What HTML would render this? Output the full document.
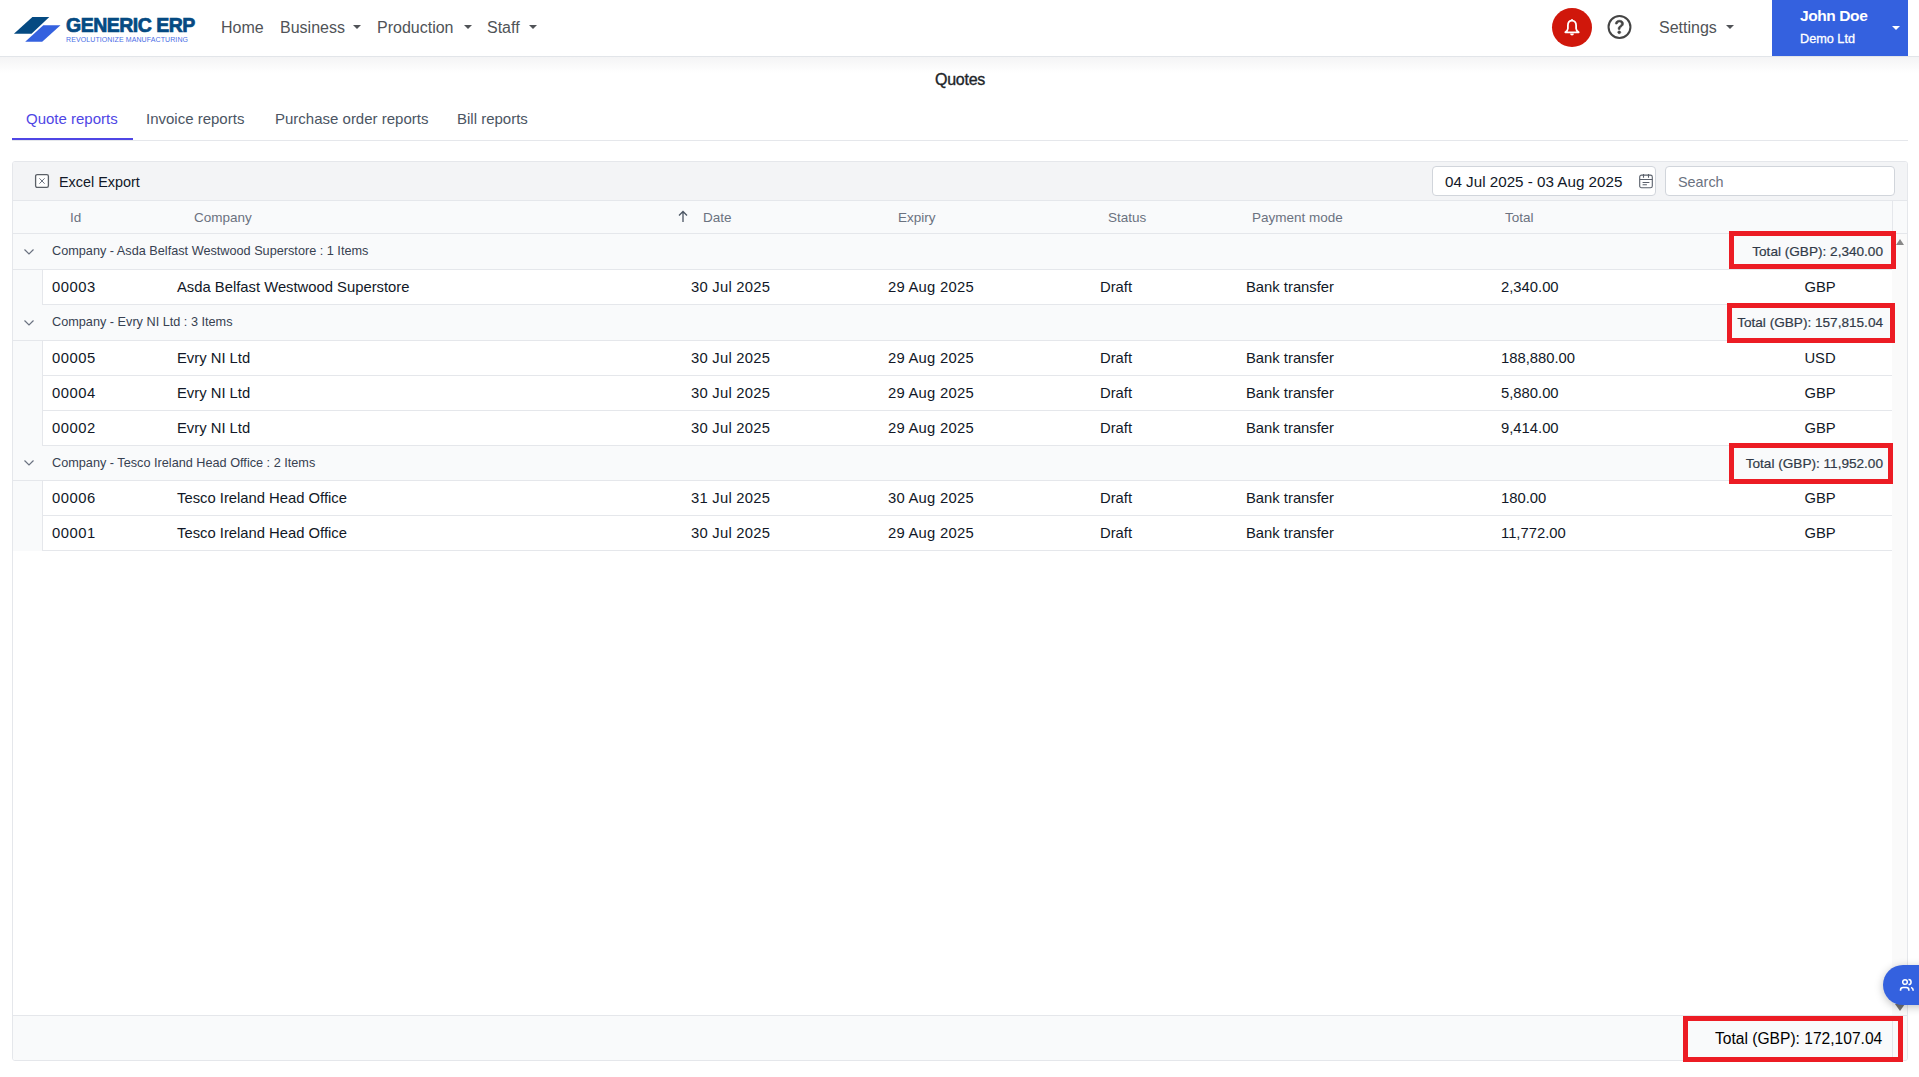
<!DOCTYPE html>
<html><head><meta charset="utf-8"><style>
*{box-sizing:border-box;margin:0;padding:0}
html,body{width:1919px;height:1077px;overflow:hidden;background:#fff;font-family:"Liberation Sans",sans-serif;position:relative}
.a{position:absolute;white-space:nowrap}
#hdr{position:absolute;left:0;top:0;width:1919px;height:57px;border-bottom:1px solid #e2e5e9;background:#fff}
#shadow{position:absolute;left:0;top:57px;width:1919px;height:16px;background:linear-gradient(#f4f4f5,#fff)}
.nav{font-size:16px;color:#505357;line-height:20px;top:18px}
.caret{position:absolute;width:0;height:0;border-left:4px solid transparent;border-right:4px solid transparent;border-top:4px solid #505357}
.tab{font-size:15px;color:#4b5563;line-height:20px;top:109px}
#tabline{position:absolute;left:12px;top:140px;width:1896px;height:1px;background:#e5e7eb}
#tabul{position:absolute;left:12px;top:138px;width:121px;height:2px;background:#4f46e5}
#box{position:absolute;left:12px;top:161px;width:1896px;height:900px;border:1px solid #e5e7eb;background:#fff;border-radius:3px}
#tool{position:absolute;left:13px;top:162px;width:1894px;height:39px;border-radius:2px 2px 0 0;background:#f3f4f6;border-bottom:1px solid #e5e7eb}
#colh{position:absolute;left:13px;top:201px;width:1894px;height:33px;background:#f9fafb;border-bottom:1px solid #e5e7eb}
#gutter{position:absolute;left:1892px;top:234px;width:15px;height:781px;background:#fafafa}
#cdiv{position:absolute;left:1892px;top:201px;width:1px;height:32px;background:#e5e7eb}
.ch{font-size:13.5px;color:#6b7280;line-height:16px;top:210px}
.grp{position:absolute;left:13px;width:1879px;background:#f9fafb;border-bottom:1px solid #e5e7eb}
.row{position:absolute;left:42px;width:1850px;background:#fff;border-left:1px solid #e5e7eb;border-bottom:1px solid #e5e7eb}
.gt{font-size:12.7px;color:#374151;line-height:16px;left:52px}
.chev{position:absolute;left:25px;width:8px;height:8px;border-right:1.3px solid #6b7280;border-bottom:1.3px solid #6b7280;transform:rotate(45deg)}
.gtt{font-size:13.6px;color:#313a48;line-height:16px;right:36px;letter-spacing:0px;-webkit-text-stroke:0.2px #313a48}
.c{font-size:14.8px;color:#111827;line-height:18px}
.rb{position:absolute;border:5px solid #ec1c24}
#foot{position:absolute;left:13px;top:1015px;width:1894px;height:45px;border-radius:0 0 2px 2px;background:#f9fafb;border-top:1px solid #e5e7eb}
</style></head><body>
<div id="hdr"></div>
<div id="shadow"></div>
<!-- logo -->
<svg class="a" style="left:0;top:0" width="66" height="50" viewBox="0 0 66 50">
<polygon points="32.4,17 49.3,17 31.5,33.8 13.9,33.8" fill="#054a82"/>
<polygon points="43.3,25.3 60.5,25.3 42.2,41.8 25.2,41.8" fill="#3461df"/>
</svg>
<div class="a" style="left:66px;top:13.5px;font-size:19.5px;font-weight:bold;color:#054a82;line-height:22px;letter-spacing:-0.5px;-webkit-text-stroke:0.7px #054a82">GENERIC ERP</div>
<div class="a" style="left:66px;top:34.5px;font-size:7px;color:#4a6ee6;line-height:9px;letter-spacing:0.1px">REVOLUTIONIZE MANUFACTURING</div>
<div class="a nav" style="left:221px">Home</div>
<div class="a nav" style="left:280px">Business</div><div class="caret" style="left:353px;top:25px"></div>
<div class="a nav" style="left:377px">Production</div><div class="caret" style="left:464px;top:25px"></div>
<div class="a nav" style="left:487px">Staff</div><div class="caret" style="left:529px;top:25px"></div>
<!-- right header -->
<div class="a" style="left:1552px;top:8px;width:40px;height:39px;border-radius:50%;background:#d0170b"></div>
<svg class="a" style="left:1562px;top:17px" width="20" height="20" viewBox="0 0 20 20"><circle cx="10" cy="3" r="1" fill="#fff"/><path d="M10 3.6C7.2 3.6 5.9 5.8 5.9 8.6V11.6Q5.9 13.6 3.3 15.3H16.7Q14.1 13.6 14.1 11.6V8.6C14.1 5.8 12.8 3.6 10 3.6Z" fill="none" stroke="#fff" stroke-width="1.8" stroke-linejoin="round"/><path d="M8.1 16.6a1.9 1.9 0 0 0 3.8 0Z" fill="#fff"/></svg>
<svg class="a" style="left:1607px;top:15px" width="25" height="24" viewBox="0 0 16.67 16"><circle cx="8.33" cy="8" r="7.3" fill="none" stroke="#444" stroke-width="1.35"/><g transform="translate(0.33,0)"><path fill="#444" stroke="#444" stroke-width="0.4" d="M5.255 5.786a.237.237 0 0 0 .241.247h.825c.138 0 .248-.113.266-.25.09-.656.54-1.134 1.342-1.134.686 0 1.314.343 1.314 1.168 0 .635-.374.927-.965 1.371-.673.489-1.206 1.06-1.168 1.987l.003.217a.25.25 0 0 0 .25.246h.811a.25.25 0 0 0 .25-.25v-.105c0-.718.273-.927 1.01-1.486.609-.463 1.244-.977 1.244-2.056 0-1.511-1.276-2.241-2.673-2.241-1.267 0-2.655.59-2.75 2.286zm1.557 5.763c0 .533.425.927 1.01.927.609 0 1.028-.394 1.028-.927 0-.552-.42-.94-1.029-.94-.584 0-1.009.388-1.009.94z"/></g></svg>
<div class="a nav" style="left:1659px">Settings</div><div class="caret" style="left:1726px;top:25px"></div>
<div class="a" style="left:1772px;top:0;width:136px;height:56px;background:#3461df"></div>
<div class="a" style="left:1800px;top:7px;font-size:15.5px;font-weight:bold;color:#fff;line-height:18px;letter-spacing:-0.4px">John Doe</div>
<div class="a" style="left:1800px;top:32px;font-size:12.7px;color:#fff;line-height:15px;-webkit-text-stroke:0.3px #fff">Demo Ltd</div>
<div class="caret" style="left:1892px;top:26px;border-top-color:#fff"></div>
<!-- title + tabs -->
<div class="a" style="left:935px;top:70px;font-size:16px;color:#212529;line-height:20px;-webkit-text-stroke:0.35px #212529;letter-spacing:-0.25px">Quotes</div>
<div class="a tab" style="left:26px;color:#4f46e5">Quote reports</div>
<div class="a tab" style="left:146px">Invoice reports</div>
<div class="a tab" style="left:275px">Purchase order reports</div>
<div class="a tab" style="left:457px">Bill reports</div>
<div id="tabline"></div><div id="tabul"></div>
<!-- table -->
<div id="box"></div>
<div id="tool"></div>
<svg class="a" style="left:34px;top:173px" width="16" height="16" viewBox="0 0 16 16"><rect x="1.6" y="1.6" width="12.8" height="12.8" rx="1.6" fill="#fff" stroke="#5a5f66" stroke-width="1.3"/><path d="M5.4 5.3L10.6 10.7M10.6 5.3L5.4 10.7" stroke="#6b7280" stroke-width="1"/></svg>
<div class="a" style="left:59px;top:173px;font-size:14.4px;color:#111827;line-height:18px">Excel Export</div>
<div class="a" style="left:1432px;top:166px;width:224px;height:30px;border:1px solid #d1d5db;border-radius:4px;background:#fff"></div>
<div class="a" style="left:1445px;top:173px;font-size:15.2px;color:#111827;line-height:18px">04 Jul 2025 - 03 Aug 2025</div>
<svg class="a" style="left:1638px;top:172px" width="16" height="17" viewBox="0 0 16 17"><rect x="1.7" y="3.1" width="12.6" height="12.6" rx="1.8" fill="none" stroke="#5a606b" stroke-width="1.1"/><path d="M5.5 2v3.8M10.5 2v3.8M1.7 7.5h12.6" stroke="#5a606b" stroke-width="1.1"/><path d="M5 10.5h6M5 12.8h3.5" stroke="#5a606b" stroke-width="1.1" stroke-linecap="round"/></svg>
<div class="a" style="left:1665px;top:166px;width:230px;height:30px;border:1px solid #d1d5db;border-radius:4px;background:#fff"></div>
<div class="a" style="left:1678px;top:173px;font-size:14.4px;color:#6b7280;line-height:18px">Search</div>
<div id="colh"></div>
<div id="gutter"></div><div id="cdiv"></div>
<div class="a ch" style="left:70px">Id</div>
<div class="a ch" style="left:194px">Company</div>
<svg class="a" style="left:677px;top:210px" width="12" height="13" viewBox="0 0 12 13"><path d="M6 12V1.5M2 5.5l4-4 4 4" fill="none" stroke="#4b5563" stroke-width="1.3"/></svg>
<div class="a ch" style="left:703px">Date</div>
<div class="a ch" style="left:898px">Expiry</div>
<div class="a ch" style="left:1108px">Status</div>
<div class="a ch" style="left:1252px">Payment mode</div>
<div class="a ch" style="left:1505px">Total</div>

<!-- groups -->
<div class="a" style="left:13px;top:234px;width:1879px;height:317px;background:#f9fafb"></div>
<div class="grp" style="top:234px;height:36px"></div>
<svg class="a" style="left:23px;top:247px" width="12" height="9" viewBox="0 0 12 9"><path d="M1.5 2.5L6 7L10.5 2.5" fill="none" stroke="#6b7280" stroke-width="1.2"/></svg>
<div class="a gt" style="top:243px">Company - Asda Belfast Westwood Superstore : 1 Items</div>
<div class="a gtt" style="top:244px">Total (GBP): 2,340.00</div>
<div class="row" style="top:270px;height:35px"></div>

<div class="grp" style="top:305px;height:36px"></div>
<svg class="a" style="left:23px;top:318px" width="12" height="9" viewBox="0 0 12 9"><path d="M1.5 2.5L6 7L10.5 2.5" fill="none" stroke="#6b7280" stroke-width="1.2"/></svg>
<div class="a gt" style="top:314px">Company - Evry NI Ltd : 3 Items</div>
<div class="a gtt" style="top:315px">Total (GBP): 157,815.04</div>
<div class="row" style="top:341px;height:35px"></div>
<div class="row" style="top:376px;height:35px"></div>
<div class="row" style="top:411px;height:35px"></div>

<div class="grp" style="top:446px;height:35px"></div>
<svg class="a" style="left:23px;top:458px" width="12" height="9" viewBox="0 0 12 9"><path d="M1.5 2.5L6 7L10.5 2.5" fill="none" stroke="#6b7280" stroke-width="1.2"/></svg>
<div class="a gt" style="top:455px">Company - Tesco Ireland Head Office : 2 Items</div>
<div class="a gtt" style="top:456px">Total (GBP): 11,952.00</div>
<div class="row" style="top:481px;height:35px"></div>
<div class="row" style="top:516px;height:35px"></div>

<div class="a c" style="left:52px;top:278px;letter-spacing:0.5px">00003</div>
<div class="a c" style="left:177px;top:278px">Asda Belfast Westwood Superstore</div>
<div class="a c" style="left:691px;top:278px;letter-spacing:0.25px">30 Jul 2025</div>
<div class="a c" style="left:888px;top:278px;letter-spacing:0.25px">29 Aug 2025</div>
<div class="a c" style="left:1100px;top:278px">Draft</div>
<div class="a c" style="left:1246px;top:278px">Bank transfer</div>
<div class="a c" style="left:1501px;top:278px">2,340.00</div>
<div class="a c" style="left:1790px;width:60px;text-align:center;top:278px">GBP</div>
<div class="a c" style="left:52px;top:349px;letter-spacing:0.5px">00005</div>
<div class="a c" style="left:177px;top:349px">Evry NI Ltd</div>
<div class="a c" style="left:691px;top:349px;letter-spacing:0.25px">30 Jul 2025</div>
<div class="a c" style="left:888px;top:349px;letter-spacing:0.25px">29 Aug 2025</div>
<div class="a c" style="left:1100px;top:349px">Draft</div>
<div class="a c" style="left:1246px;top:349px">Bank transfer</div>
<div class="a c" style="left:1501px;top:349px">188,880.00</div>
<div class="a c" style="left:1790px;width:60px;text-align:center;top:349px">USD</div>
<div class="a c" style="left:52px;top:384px;letter-spacing:0.5px">00004</div>
<div class="a c" style="left:177px;top:384px">Evry NI Ltd</div>
<div class="a c" style="left:691px;top:384px;letter-spacing:0.25px">30 Jul 2025</div>
<div class="a c" style="left:888px;top:384px;letter-spacing:0.25px">29 Aug 2025</div>
<div class="a c" style="left:1100px;top:384px">Draft</div>
<div class="a c" style="left:1246px;top:384px">Bank transfer</div>
<div class="a c" style="left:1501px;top:384px">5,880.00</div>
<div class="a c" style="left:1790px;width:60px;text-align:center;top:384px">GBP</div>
<div class="a c" style="left:52px;top:419px;letter-spacing:0.5px">00002</div>
<div class="a c" style="left:177px;top:419px">Evry NI Ltd</div>
<div class="a c" style="left:691px;top:419px;letter-spacing:0.25px">30 Jul 2025</div>
<div class="a c" style="left:888px;top:419px;letter-spacing:0.25px">29 Aug 2025</div>
<div class="a c" style="left:1100px;top:419px">Draft</div>
<div class="a c" style="left:1246px;top:419px">Bank transfer</div>
<div class="a c" style="left:1501px;top:419px">9,414.00</div>
<div class="a c" style="left:1790px;width:60px;text-align:center;top:419px">GBP</div>
<div class="a c" style="left:52px;top:489px;letter-spacing:0.5px">00006</div>
<div class="a c" style="left:177px;top:489px">Tesco Ireland Head Office</div>
<div class="a c" style="left:691px;top:489px;letter-spacing:0.25px">31 Jul 2025</div>
<div class="a c" style="left:888px;top:489px;letter-spacing:0.25px">30 Aug 2025</div>
<div class="a c" style="left:1100px;top:489px">Draft</div>
<div class="a c" style="left:1246px;top:489px">Bank transfer</div>
<div class="a c" style="left:1501px;top:489px">180.00</div>
<div class="a c" style="left:1790px;width:60px;text-align:center;top:489px">GBP</div>
<div class="a c" style="left:52px;top:524px;letter-spacing:0.5px">00001</div>
<div class="a c" style="left:177px;top:524px">Tesco Ireland Head Office</div>
<div class="a c" style="left:691px;top:524px;letter-spacing:0.25px">30 Jul 2025</div>
<div class="a c" style="left:888px;top:524px;letter-spacing:0.25px">29 Aug 2025</div>
<div class="a c" style="left:1100px;top:524px">Draft</div>
<div class="a c" style="left:1246px;top:524px">Bank transfer</div>
<div class="a c" style="left:1501px;top:524px">11,772.00</div>
<div class="a c" style="left:1790px;width:60px;text-align:center;top:524px">GBP</div>

<div id="foot"></div>
<div class="a" style="left:1892px;top:1016px;width:1px;height:44px;background:#e5e7eb"></div>
<div class="a" style="left:1715px;top:1030px;font-size:15.6px;color:#000;line-height:18px">Total (GBP): 172,107.04</div>

<!-- annotation boxes -->
<div class="rb" style="left:1729px;top:231px;width:167px;height:38px"></div>
<div class="rb" style="left:1727px;top:303px;width:168px;height:40px"></div>
<div class="rb" style="left:1729px;top:443px;width:164px;height:41px"></div>
<div class="rb" style="left:1683px;top:1016px;width:220px;height:46px"></div>
<!-- scrollbar arrows -->
<div class="a" style="left:1896px;top:239px;width:0;height:0;border-left:4.5px solid transparent;border-right:4.5px solid transparent;border-bottom:6px solid #888"></div>
<div class="a" style="left:1895px;top:1004px;width:0;height:0;border-left:5px solid transparent;border-right:5px solid transparent;border-top:7px solid #737373"></div>
<!-- chat bubble -->
<div class="a" style="left:1883px;top:965px;width:60px;height:40px;border-radius:20px;background:#3461df;box-shadow:0 2px 8px rgba(0,0,0,0.25)"></div>
<svg class="a" style="left:1898.8px;top:978px" width="20" height="15" viewBox="0 0 20 15"><circle cx="6" cy="4" r="2.3" fill="none" stroke="#fff" stroke-width="1.5"/><path d="M9.5 1.4a2.6 2.6 0 0 1 0 5.2" fill="none" stroke="#fff" stroke-width="1.5"/><path d="M1.55 12.7V11.9c0-1.6 1-2.45 2.6-2.45h3.2c1.6 0 2.5 0.85 2.5 2.45v0.8" fill="none" stroke="#fff" stroke-width="1.6"/><path d="M12 9.45c1.3 0.3 2.1 1.2 2.1 2.5v0.75" fill="none" stroke="#fff" stroke-width="1.6"/></svg>
</body></html>
